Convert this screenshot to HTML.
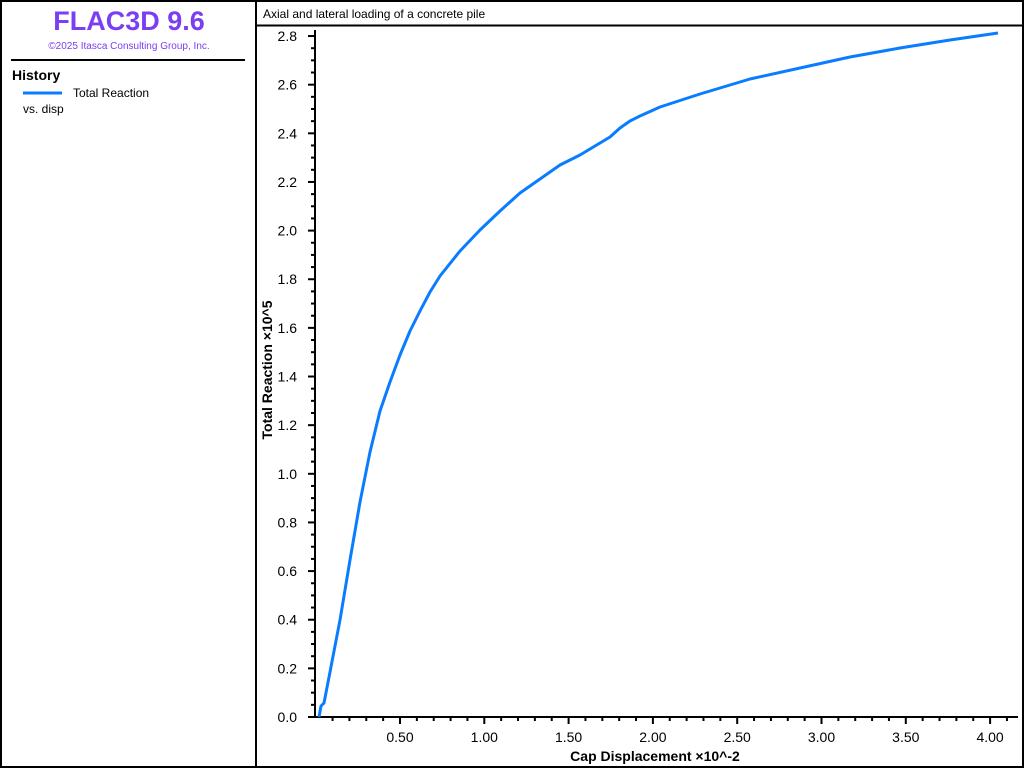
<!DOCTYPE html>
<html><head><meta charset="utf-8"><style>
body{margin:0;width:1024px;height:768px;background:#fff;overflow:hidden;font-family:"Liberation Sans",sans-serif}
</style></head><body>
<svg width="1024" height="768" viewBox="0 0 1024 768" xmlns="http://www.w3.org/2000/svg" style="position:absolute;left:0;top:0">
<rect x="1" y="1" width="1022" height="766" fill="#fff" stroke="#000" stroke-width="2"/>
<line x1="256" y1="0" x2="256" y2="768" stroke="#000" stroke-width="2"/>
<line x1="256" y1="25.5" x2="1024" y2="25.5" stroke="#000" stroke-width="2"/>
<line x1="11" y1="60" x2="245" y2="60" stroke="#000" stroke-width="2"/>
<text x="129" y="30" text-anchor="middle" font-size="27" font-weight="bold" fill="#7b3ff2">FLAC3D 9.6</text>
<text x="129" y="49" text-anchor="middle" font-size="10" fill="#7b3ff2">©2025 Itasca Consulting Group, Inc.</text>
<text x="12" y="80" font-size="14" font-weight="bold">History</text>
<line x1="23" y1="93" x2="62" y2="93" stroke="#0a7cff" stroke-width="3"/>
<text x="73" y="97" font-size="12">Total Reaction</text>
<text x="23" y="113" font-size="12">vs. disp</text>
<text x="263" y="18" font-size="12">Axial and lateral loading of a concrete pile</text>
<g stroke="#000" stroke-width="2">
<line x1="315" y1="30" x2="315" y2="718"/>
<line x1="314" y1="717" x2="1018" y2="717"/>
</g>
<g id="ticks" stroke="#000" stroke-width="2"></g>
<g id="labels" font-size="14" fill="#000"></g>
<polyline fill="none" stroke="#0a7cff" stroke-width="3" stroke-linejoin="round" points="319,717 321,706 324,703 330,672 340,620 350,560 360,502 370,452 380,411 390,382 400,355 410,331 420,311 430,292 440,276 460,251 480,230 500,211 520,193 540,179 560,165 580,155 600,143 610,137 620,128 630,121 640,116 660,107 700,94 750,79 800,68 850,57 900,48 950,40 998,33"/>
<text x="655" y="761" text-anchor="middle" font-size="14" font-weight="bold">Cap Displacement ×10^-2</text>
<text transform="translate(272,370) rotate(-90)" text-anchor="middle" font-size="14" font-weight="bold">Total Reaction ×10^5</text>
</svg>
<script>
var t=document.getElementById('ticks'),l=document.getElementById('labels'),ns='http://www.w3.org/2000/svg';
function ln(a,b,c,d){var e=document.createElementNS(ns,'line');e.setAttribute('x1',a);e.setAttribute('y1',b);e.setAttribute('x2',c);e.setAttribute('y2',d);t.appendChild(e);}
function tx(x,y,s,a){var e=document.createElementNS(ns,'text');e.setAttribute('x',x);e.setAttribute('y',y);e.setAttribute('text-anchor',a);e.textContent=s;l.appendChild(e);}
var y0=717,dy=48.64;
for(var i=0;i<=56;i++){var y=y0-i*dy/4;if(i%4==0){ln(308,y,315,y);tx(297,y+5,(i/20).toFixed(1),'end');}else ln(311,y,315,y);}
var x0=315.7,dx=168.6;
for(var j=1;j<=41;j++){var x=x0+j*dx/10;if(j%5==0){ln(x,717,x,724);tx(x,742,(j/10).toFixed(2),'middle');}else ln(x,717,x,721);}
</script>
</body></html>
